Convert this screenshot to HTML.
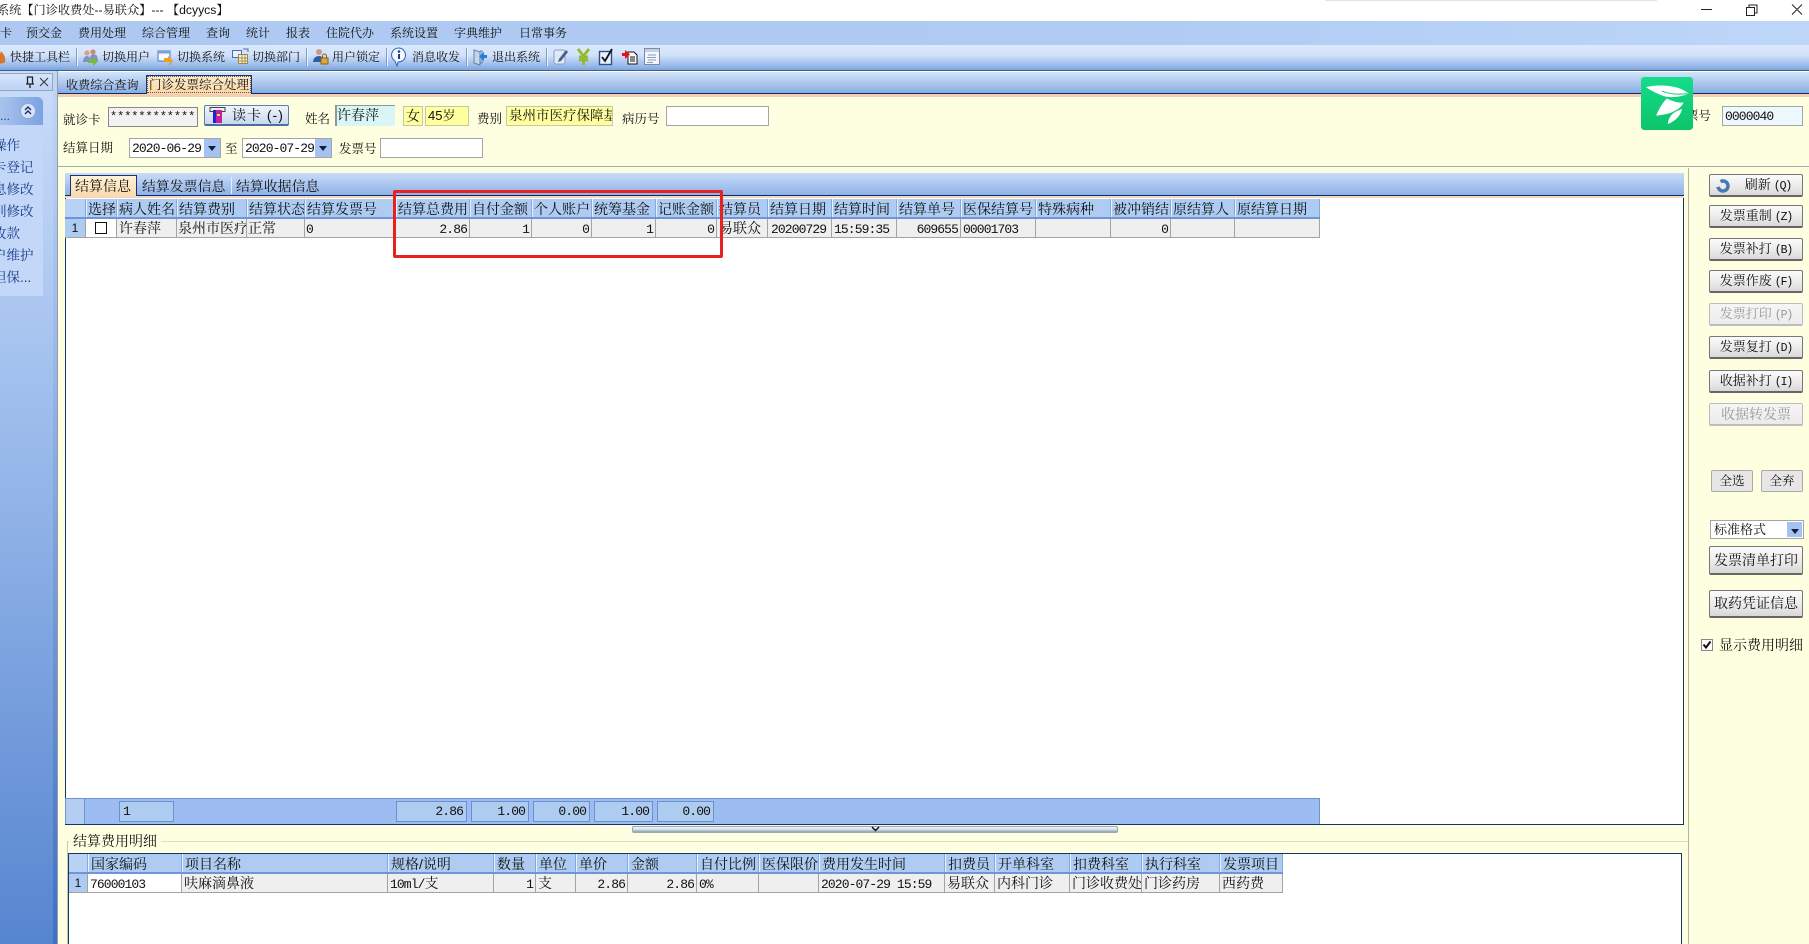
<!DOCTYPE html>
<html lang="zh"><head><meta charset="utf-8"><title>门诊收费处</title>
<style>
html,body{margin:0;padding:0}
body{width:1809px;height:944px;position:relative;overflow:hidden;background:#fefee0;font-family:"Liberation Sans","Noto Serif CJK SC",serif;font-size:12px;color:#111}
div,span{box-sizing:border-box}
.a{position:absolute}
.t{position:absolute;white-space:nowrap;height:16px;line-height:16px}
.n{font-family:"Liberation Mono","Noto Serif CJK SC",monospace;font-size:13px;letter-spacing:-.9px}
.b{font-family:"Liberation Mono",monospace;font-size:11.500px;letter-spacing:-1.100px;margin-left:3px}
.ic{position:absolute}
.sep{position:absolute;top:48px;width:2px;height:18px;border-left:1px solid #7f9cc8;border-right:1px solid #eef4fd}
.f13{font-size:12.5px}
.in{position:absolute;border:1px solid #a5a5a5;height:20px;line-height:18px;padding-left:2px;background:#fff;white-space:nowrap;overflow:hidden;font-size:13.5px}
.dd{position:absolute;width:16px;height:18px;top:0;right:0;background:#a5c2f2}
.dd:after{content:"";position:absolute;left:4px;top:7px;border:4px solid transparent;border-top:5px solid #10203c;border-bottom:0}
.btn{position:absolute;left:1709px;width:94px;height:23px;border:1px solid #777;border-bottom:2px solid #666;border-radius:2px;background:linear-gradient(#fbfbfb,#e9e9e9 60%,#d8d8d8);text-align:center;line-height:20px;font-size:13px;white-space:nowrap}
.dis{border:1px solid #bdbdbd;border-bottom:2px solid #bdbdbd;color:#999;background:linear-gradient(#f6f6f6,#ebebeb)}
.gh,.gr{position:absolute;display:flex;font-size:14px;white-space:nowrap}
.gh{height:20px;background:#aecbf2;border-bottom:2px solid #6d95d8}
.gh div{flex:none;line-height:20px;border-left:1px solid #e8f0fc;padding-left:2px;overflow:hidden;border-right:1px solid #84a8e0}
.m div{padding-left:1px}
.gr{background:#efefef;height:19px}
.gr div{flex:none;line-height:18px;border-right:1px solid #a3a3a3;border-bottom:1px solid #a3a3a3;padding:0 2px;overflow:hidden}
.gr .r{text-align:right}
.gr .w{background:#fff}
.gr .h{background:#aecbf2;text-align:center;font-size:12px}
.sb{position:absolute;top:801px;height:21px;background:#aecbf0;border:1px solid #6b90d2;line-height:19px;text-align:right;padding-right:3px}
.sd{position:absolute;left:-7px;white-space:nowrap;color:#173a86;font-size:13.5px;height:18px;line-height:18px}
</style></head><body>

<!-- title bar -->
<div class="a" style="left:0;top:0;width:1809px;height:21px;background:#fff"></div>
<div class="a" style="left:1325px;top:0;width:332px;height:1px;background:#e4e4e4"></div>
<div class="t" style="left:-3px;top:2px;font-size:12.2px">系统【门诊收费处--易联众】--- 【dcyycs】</div>
<svg class="ic" style="left:1695px;top:1px" width="114" height="16"><path d="M6 8.500H17M51.500 6.500h8v8h-8zM54 6.500V4h8v8h-2.500M97 3.500l10 10M107 3.500l-10 10" fill="none" stroke="#222" stroke-width="1"/></svg>

<!-- menu -->
<div class="a" style="left:0;top:21px;width:1809px;height:24px;background:linear-gradient(90deg,#adc9f2,#afcbf3 60%,#bdd6f8)"></div>
<div class="t" style="left:0;top:25px">卡</div>
<div class="t" style="left:26px;top:25px">预交金</div>
<div class="t" style="left:78px;top:25px">费用处理</div>
<div class="t" style="left:142px;top:25px">综合管理</div>
<div class="t" style="left:206px;top:25px">查询</div>
<div class="t" style="left:246px;top:25px">统计</div>
<div class="t" style="left:286px;top:25px">报表</div>
<div class="t" style="left:326px;top:25px">住院代办</div>
<div class="t" style="left:390px;top:25px">系统设置</div>
<div class="t" style="left:454px;top:25px">字典维护</div>
<div class="t" style="left:519px;top:25px">日常事务</div>

<!-- toolbar -->
<div class="a" style="left:0;top:45px;width:1809px;height:26px;background:linear-gradient(#dbe9fd,#d2e2fa 40%,#9dbcea 80%,#7da5dd);border-bottom:1px solid #33609f"></div>
<div class="t" style="left:10px;top:49px">快捷工具栏</div>
<div class="t" style="left:102px;top:49px">切换用户</div>
<div class="t" style="left:177px;top:49px">切换系统</div>
<div class="t" style="left:252px;top:49px">切换部门</div>
<div class="t" style="left:332px;top:49px">用户锁定</div>
<div class="t" style="left:412px;top:49px">消息收发</div>
<div class="t" style="left:492px;top:49px">退出系统</div>
<span class="sep" style="left:76px"></span><span class="sep" style="left:306px"></span><span class="sep" style="left:386px"></span><span class="sep" style="left:466px"></span><span class="sep" style="left:546px"></span>
<svg class="ic" style="left:0;top:48px" width="8" height="18"><path d="M-3 14C-3 9 0 8 1 3C4 7 6 9 5 14C4 16 -2 16 -3 14Z" fill="#d9762a"/></svg>
<svg class="ic" style="left:82px;top:48px" width="17" height="18"><circle cx="11" cy="4" r="2.600" fill="#c98a7a"/><circle cx="5" cy="5" r="2.600" fill="#d9a08a"/><path d="M1 14c0-4 2-6 4-6s4 2 4 6zM8 8c2-2 6-2 7 0l1 5H9z" fill="#7c94c4"/><path d="M6 12h5V9l5 4.500-5 4.500v-3H6z" fill="#7cb83c"/></svg>
<svg class="ic" style="left:157px;top:48px" width="17" height="18"><rect x="1" y="3" width="12" height="10" fill="#f8f8ff" stroke="#4a78c0"/><rect x="1" y="3" width="12" height="2.500" fill="#7aa0dc"/><path d="M7 10h4v-2l5 5-3 4h-2l2-3H7z" fill="#e7a21e"/></svg>
<svg class="ic" style="left:232px;top:48px" width="17" height="18"><rect x="0.500" y="2.500" width="9" height="7" fill="#e8f0ff" stroke="#476fb0"/><rect x="6.500" y="6.500" width="9" height="9" fill="#fdf6d8" stroke="#9a8a4a"/><path d="M7 10h8M7 13h8M10 7v8M13 7v8" stroke="#a68f4c" fill="none"/><path d="M11 1h5v3" stroke="#476fb0" fill="none"/></svg>
<svg class="ic" style="left:313px;top:48px" width="16" height="18"><circle cx="6" cy="4" r="3" fill="#c99a86"/><path d="M0 14c0-4 3-6 6-6s5 2 5 6z" fill="#2f5ea8"/><rect x="8" y="10" width="7" height="6" fill="#e0a83a" stroke="#8a6414"/><path d="M9.500 10V8a2 2 0 0 1 4 0v2" stroke="#8a6414" fill="none"/></svg>
<svg class="ic" style="left:391px;top:47px" width="16" height="20"><path d="M8 1a7 7 0 1 1-1 14l-1 4-2-5A7 7 0 0 1 8 1z" fill="#f4f8ff" stroke="#2a64b8"/><circle cx="8" cy="4.500" r="1.300" fill="#1c3f86"/><path d="M7 7h2v5H7z" fill="#1c3f86"/></svg>
<svg class="ic" style="left:472px;top:48px" width="16" height="18"><path d="M2 2l6 2v13l-6-2z" fill="#c6d4ea" stroke="#6a7fa6"/><path d="M8 3h2v12H8" fill="none" stroke="#6a7fa6"/><path d="M15 7h-3V4l-5 4.500 5 4.500v-3h3z" fill="#1f7fe0"/></svg>
<svg class="ic" style="left:553px;top:48px" width="16" height="18"><rect x="1" y="2" width="11" height="14" rx="2" fill="#dfe8f6" stroke="#8aa0c4"/><path d="M6 11l7-9 2 2-7 9-3 1z" fill="#4a5f86"/></svg>
<svg class="ic" style="left:576px;top:48px" width="15" height="18"><path d="M2 1l5.500 7 5.500-7M3 9h9M3 12h9M7.500 8v9" fill="none" stroke="#94ba2e" stroke-width="2.800"/></svg>
<svg class="ic" style="left:598px;top:48px" width="16" height="18"><rect x="1.500" y="3.500" width="12" height="13" fill="#eaf0fb" stroke="#2e4f8c" stroke-width="1.400"/><path d="M4 9l3 4 7-12" fill="none" stroke="#111" stroke-width="1.800"/></svg>
<svg class="ic" style="left:622px;top:47px" width="16" height="18"><path d="M6 5h6l3 3v9H6z" fill="#fff" stroke="#111"/><path d="M8 10h5M8 12h5M8 14h5" stroke="#111"/><path d="M0 6h3V3l5 4.500L3 12V9H0z" fill="#e8101a"/></svg>
<svg class="ic" style="left:644px;top:48px" width="17" height="18"><rect x="0.500" y="0.500" width="15" height="16" fill="#f4f6fb" stroke="#7a8aa4"/><rect x="1" y="1" width="14" height="3" fill="#c4d0e6"/><path d="M4 7h8M3 9.500h9M4 12h8M3 14.500h6" stroke="#8a9ac0"/></svg>

<!-- sidebar -->
<div class="a" style="left:0;top:71px;width:58px;height:873px;background:linear-gradient(#cadcf8,#a8c5f0 30%,#5685d0)"></div>
<div class="a" style="left:53px;top:71px;width:5px;height:873px;background:linear-gradient(#c2d6f6,#9cbbec 30%,#3e70c6);border-right:1px solid #9a9aa4"></div>
<div class="a" style="left:-2px;top:73px;width:55px;height:18px;background:linear-gradient(#d6e5fc,#bdd3f6);border:1px solid #94a7c4"></div>
<svg class="ic" style="left:24px;top:74px" width="26" height="16"><path d="M3.500 3h5v7h-5zM6 10v4M2 10h8" fill="none" stroke="#222" stroke-width="1.300"/><path d="M16 4l8 8M24 4l-8 8" stroke="#333" fill="none"/></svg>
<div class="a" style="left:0;top:97px;width:43px;height:199px;background:#c3d8f8"></div>
<div class="a" style="left:0;top:97px;width:43px;height:28px;background:linear-gradient(90deg,#a9c3ee,#7ba2e2);border-radius:0 6px 0 0"></div>
<div class="t" style="left:0;top:108px;color:#173a86">...</div>
<div class="a" style="left:20px;top:103px;width:16px;height:16px;border-radius:50%;background:#d7e3f8;border:1px solid #8fa9d6"></div>
<svg class="ic" style="left:23px;top:106px" width="10" height="10"><path d="M2 4l3-3 3 3M2 8l3-3 3 3" fill="none" stroke="#16305c" stroke-width="1.400"/></svg>
<div class="sd" style="top:137px">操作</div>
<div class="sd" style="top:159px">卡登记</div>
<div class="sd" style="top:181px">息修改</div>
<div class="sd" style="top:203px">别修改</div>
<div class="sd" style="top:225px">收款</div>
<div class="sd" style="top:247px">户维护</div>
<div class="sd" style="top:269px">担保...</div>

<!-- tab band -->
<div class="a" style="left:58px;top:72px;width:1751px;height:22px;background:linear-gradient(#d4e4fb,#9fbeea 70%,#86abe2);border-bottom:1px solid #0d2a6c"></div>
<div class="a" style="left:58px;top:94px;width:1751px;height:3px;background:#f3cfb0"></div>
<div class="t" style="left:66px;top:77px;font-size:12.100px">收费综合查询</div>
<div class="a" style="left:146px;top:75px;width:106px;height:19px;background:linear-gradient(#fdeacb,#fad7a6);border:1px solid #1a3575;border-bottom:0;font-size:12.500px;line-height:18px;padding-left:2px;white-space:nowrap;outline:1px dotted #555;outline-offset:-2px">门诊发票综合处理</div>

<!-- form -->
<div class="t f13" style="left:63px;top:112px">就诊卡</div>
<div class="in" style="left:108px;top:107px;width:90px;background:#f2f2f2;border-color:#888;font-size:12px;font-family:'Liberation Mono',monospace;padding-left:1px;letter-spacing:-.100px">************</div>
<div class="a" style="left:204px;top:105px;width:85px;height:21px;border:1px solid #5a80ac;border-bottom:2px solid #49709e;border-radius:2px;background:linear-gradient(#f0f5fc,#c8d8ec)"></div>
<svg class="ic" style="left:209px;top:107px" width="18" height="17"><rect x="1" y="0.500" width="15" height="4" fill="#eee" stroke="#444"/><rect x="4" y="3" width="9" height="13" fill="#c81ea4"/><rect x="4" y="3" width="3" height="13" fill="#2222d8"/><path d="M8 8h3" stroke="#e8e020" stroke-width="2"/></svg>
<div class="t" style="left:232px;top:107px;font-size:14px;letter-spacing:1px">读卡 (-)</div>
<div class="t f13" style="left:305px;top:111px">姓名</div>
<div class="in" style="left:335px;top:105px;width:60px;height:21px;background:#d9f6f6;border:0;border-left:2px solid #8a9a9a;border-top:1px solid #8a9a9a;line-height:19px;font-size:14px;padding-left:0">许春萍</div>
<div class="in" style="left:403px;top:106px;width:20px;background:#ffff9d;border-color:#c8c8a0;font-size:14px">女</div>
<div class="in" style="left:425px;top:106px;width:44px;background:#ffff9d;border-color:#c8c8a0;font-size:13px">45岁</div>
<div class="t f13" style="left:477px;top:111px">费别</div>
<div class="in" style="left:506px;top:106px;width:107px;background:#ffff9d;border-color:#c8c8a0;font-size:13.500px">泉州市医疗保障基</div>
<div class="t f13" style="left:622px;top:111px">病历号</div>
<div class="in" style="left:666px;top:106px;width:103px"></div>
<div class="t f13" style="left:1693px;top:108px;width:18px;overflow:hidden"><span style="position:absolute;right:0">票号</span></div>
<div class="in" style="left:1722px;top:106px;width:81px;background:#eef8ff"><span class="n">0000040</span></div>

<div class="t f13" style="left:63px;top:140px">结算日期</div>
<div class="in" style="left:129px;top:138px;width:92px"><span class="n">2020-06-29</span><span class="dd"></span></div>
<div class="t f13" style="left:225px;top:141px">至</div>
<div class="in" style="left:242px;top:138px;width:90px"><span class="n">2020-07-29</span><span class="dd"></span></div>
<div class="t f13" style="left:339px;top:141px">发票号</div>
<div class="in" style="left:380px;top:138px;width:103px"></div>
<div class="a" style="left:58px;top:166px;width:1751px;height:1px;background:#aaa"></div>
<div class="a" style="left:1688px;top:168px;width:1px;height:776px;background:#b4b4a0"></div>

<!-- logo -->
<svg class="ic" style="left:1641px;top:77px" width="52" height="53" viewBox="33 20 155 158"><defs><linearGradient id="g" x1="0" y1="0" x2="0" y2="1"><stop offset="0" stop-color="#16dc8a"/><stop offset="1" stop-color="#0cc46a"/></linearGradient></defs><rect x="33" y="20" width="155" height="158" rx="10" fill="url(#g)"/><path d="M48 50C90 40 150 45 175 70C150 80 125 82 105 78C85 72 65 62 48 50Z" fill="#fff"/><path d="M95 62C120 72 145 72 172 70" fill="none" stroke="#12cf7c" stroke-width="3"/><path d="M78 135C88 112 98 96 110 84C130 94 148 98 160 96C150 118 120 132 78 135Z" fill="#fff"/><path d="M113 160C114 142 125 130 135 124L155 115C152 135 135 152 113 160Z" fill="#fff"/></svg>

<!-- inner tabs -->
<div class="a" style="left:65px;top:173px;width:1619px;height:23px;background:linear-gradient(#c9dcf8,#a5c3ee 60%,#8fb2e6);border-bottom:1px solid #0d2a6c"></div>
<div class="a" style="left:65px;top:196px;width:1619px;height:2px;background:#f3d8c0"></div>
<div class="a" style="left:70px;top:175px;width:67px;height:21px;background:linear-gradient(#fff3da,#fbd9ac);border:1px solid #1a3575;border-bottom:0;font-size:14px;line-height:20px;padding-left:4px;white-space:nowrap">结算信息</div>
<div class="t" style="left:142px;top:178px;font-size:13.900px">结算发票信息</div>
<div class="a" style="left:231px;top:177px;width:1px;height:17px;background:#e4eefc"></div>
<div class="t" style="left:236px;top:178px;font-size:13.900px">结算收据信息</div>

<!-- main grid -->
<div class="a" style="left:65px;top:198px;width:1619px;height:627px;background:#fff;border:1px solid #123764;border-top:0"></div>
<div class="gh m" style="left:65px;top:199px">
<div style="width:21px;border-left:0;background:#b9d1f2"></div><div style="width:31px">选择</div><div style="width:60px">病人姓名</div><div style="width:70px">结算费别</div><div style="width:58px">结算状态</div><div style="width:91px">结算发票号</div><div style="width:74px">结算总费用</div><div style="width:62px">自付金额</div><div style="width:60px">个人账户</div><div style="width:64px">统筹基金</div><div style="width:61px">记账金额</div><div style="width:51px">结算员</div><div style="width:64px">结算日期</div><div style="width:65px">结算时间</div><div style="width:64px">结算单号</div><div style="width:75px">医保结算号</div><div style="width:75px">特殊病种</div><div style="width:60px">被冲销结</div><div style="width:64px">原结算人</div><div style="width:85px">原结算日期</div>
</div>
<div class="gr" style="left:65px;top:219px">
<div class="h" style="width:21px">1</div><div class="w" style="width:31px;position:relative"><span class="a" style="left:9px;top:3px;width:12px;height:12px;border:1px solid #111;background:#fff"></span></div><div style="width:60px;padding-left:2px">许春萍</div><div style="width:70px;padding-left:1px">泉州市医疗保障</div><div style="width:58px;padding-left:1px">正常</div><div style="width:91px;padding-left:1px"><span class="n">0</span></div><div class="r" style="width:74px"><span class="n">2.86</span></div><div class="r" style="width:62px"><span class="n">1</span></div><div class="r" style="width:60px"><span class="n">0</span></div><div class="r" style="width:64px"><span class="n">1</span></div><div class="r" style="width:61px"><span class="n">0</span></div><div style="width:51px">易联众</div><div style="width:64px;padding-left:3px"><span class="n">20200729</span></div><div style="width:65px"><span class="n">15:59:35</span></div><div class="r" style="width:64px"><span class="n">609655</span></div><div style="width:75px"><span class="n">00001703</span></div><div style="width:75px"></div><div class="r" style="width:60px"><span class="n">0</span></div><div style="width:64px"></div><div style="width:85px"></div>
</div>

<!-- summary -->
<div class="a" style="left:65px;top:798px;width:1255px;height:26px;background:#9dbcf2;border:1px solid #6e93cf;border-bottom:0"></div>
<div class="a" style="left:66px;top:799px;width:19px;height:25px;background:#b4cdf2;border-right:1px solid #6e93cf"></div>
<div class="sb" style="left:119px;width:55px;text-align:left;padding-left:3px"><span class="n">1</span></div>
<div class="sb" style="left:396px;width:71px"><span class="n">2.86</span></div>
<div class="sb" style="left:471px;width:58px"><span class="n">1.00</span></div>
<div class="sb" style="left:533px;width:57px"><span class="n">0.00</span></div>
<div class="sb" style="left:594px;width:59px"><span class="n">1.00</span></div>
<div class="sb" style="left:657px;width:57px"><span class="n">0.00</span></div>
<div class="a" style="left:65px;top:824px;width:1619px;height:1px;background:#123764"></div>

<!-- splitter -->
<div class="a" style="left:632px;top:826px;width:486px;height:7px;background:linear-gradient(#f4f8fb,#d4e0ea 50%,#8f9fac);border:1px solid #9aa8b4;border-radius:2px"></div>
<svg class="ic" style="left:871px;top:826px" width="9" height="6"><path d="M1 1l3.500 3.500L8 1" fill="none" stroke="#111" stroke-width="1.500"/></svg>

<!-- detail -->
<div class="a" style="left:67px;top:841px;width:1621px;height:1px;background:#dcdcc4"></div>
<div class="a" style="left:67px;top:841px;width:1px;height:103px;background:#c8c8b0"></div>
<div class="t" style="left:69px;top:833px;padding:0 4px;background:#fefee0;font-size:14px">结算费用明细</div>
<div class="a" style="left:68px;top:853px;width:1614px;height:91px;background:#fff;border:1px solid #123764;border-bottom:0"></div>
<div class="gh" style="left:69px;top:854px">
<div style="width:19px;border-left:0;background:#b9d1f2"></div><div style="width:94px">国家编码</div><div style="width:206px">项目名称</div><div style="width:106px">规格/说明</div><div style="width:42px">数量</div><div style="width:40px">单位</div><div style="width:52px">单价</div><div style="width:69px">金额</div><div style="width:62px">自付比例</div><div style="width:60px">医保限价</div><div style="width:126px">费用发生时间</div><div style="width:50px">扣费员</div><div style="width:75px">开单科室</div><div style="width:72px">扣费科室</div><div style="width:78px">执行科室</div><div style="width:63px">发票项目</div>
</div>
<div class="gr" style="left:69px;top:874px">
<div class="h" style="width:19px">1</div><div class="w" style="width:94px"><span class="n">76000103</span></div><div style="width:206px">呋麻滴鼻液</div><div style="width:106px"><span class="n">10ml/</span>支</div><div class="r" style="width:42px"><span class="n">1</span></div><div style="width:40px">支</div><div class="r" style="width:52px"><span class="n">2.86</span></div><div class="r" style="width:69px"><span class="n">2.86</span></div><div style="width:62px"><span class="n">0%</span></div><div style="width:60px"></div><div style="width:126px"><span class="n">2020-07-29 15:59</span></div><div style="width:50px">易联众</div><div style="width:75px">内科门诊</div><div style="width:72px">门诊收费处</div><div style="width:78px">门诊药房</div><div style="width:63px">西药费</div>
</div>

<!-- right buttons -->
<div class="btn" style="top:174px;padding-left:24px">刷新<span class="b">(Q)</span></div>
<svg class="ic" style="left:1715px;top:178px" width="16" height="16"><circle cx="8" cy="8" r="5" fill="none" stroke="#4a78b4" stroke-width="3.500" stroke-dasharray="20 6" transform="rotate(-60 8 8)"/></svg>
<div class="btn" style="top:205px">发票重制<span class="b">(Z)</span></div>
<div class="btn" style="top:238px">发票补打<span class="b">(B)</span></div>
<div class="btn" style="top:270px">发票作废<span class="b">(F)</span></div>
<div class="btn dis" style="top:303px">发票打印<span class="b">(P)</span></div>
<div class="btn" style="top:336px">发票复打<span class="b">(D)</span></div>
<div class="btn" style="top:370px">收据补打<span class="b">(I)</span></div>
<div class="btn dis" style="top:403px;font-size:14px">收据转发票</div>
<div class="btn" style="left:1711px;top:470px;width:42px;height:22px;border:1px solid #aaa;background:#e6e6e6;font-size:12.500px">全选</div>
<div class="btn" style="left:1761px;top:470px;width:42px;height:22px;border:1px solid #aaa;background:#e6e6e6;font-size:12.500px">全弃</div>
<div class="in" style="left:1710px;top:520px;width:94px;height:19px;font-size:13px;line-height:17px;padding-left:3px">标准格式<span class="dd" style="top:1px;right:1px;width:15px;height:15px"></span></div>
<div class="btn" style="top:546px;height:29px;line-height:26px;font-size:14px">发票清单打印</div>
<div class="btn" style="top:590px;height:28px;line-height:25px;font-size:14px">取药凭证信息</div>
<div class="a" style="left:1701px;top:639px;width:12px;height:12px;border:1px solid #888;background:#fff"></div>
<svg class="ic" style="left:1702px;top:640px" width="10" height="10"><path d="M1.500 4.500l2.500 3 4.500-6" fill="none" stroke="#111" stroke-width="2"/></svg>
<div class="t" style="left:1719px;top:637px;font-size:14px">显示费用明细</div>

<!-- red annotation -->
<div class="a" style="left:393px;top:190px;width:330px;height:68px;border:3px solid #e8201e;border-radius:2px"></div>

</body></html>
